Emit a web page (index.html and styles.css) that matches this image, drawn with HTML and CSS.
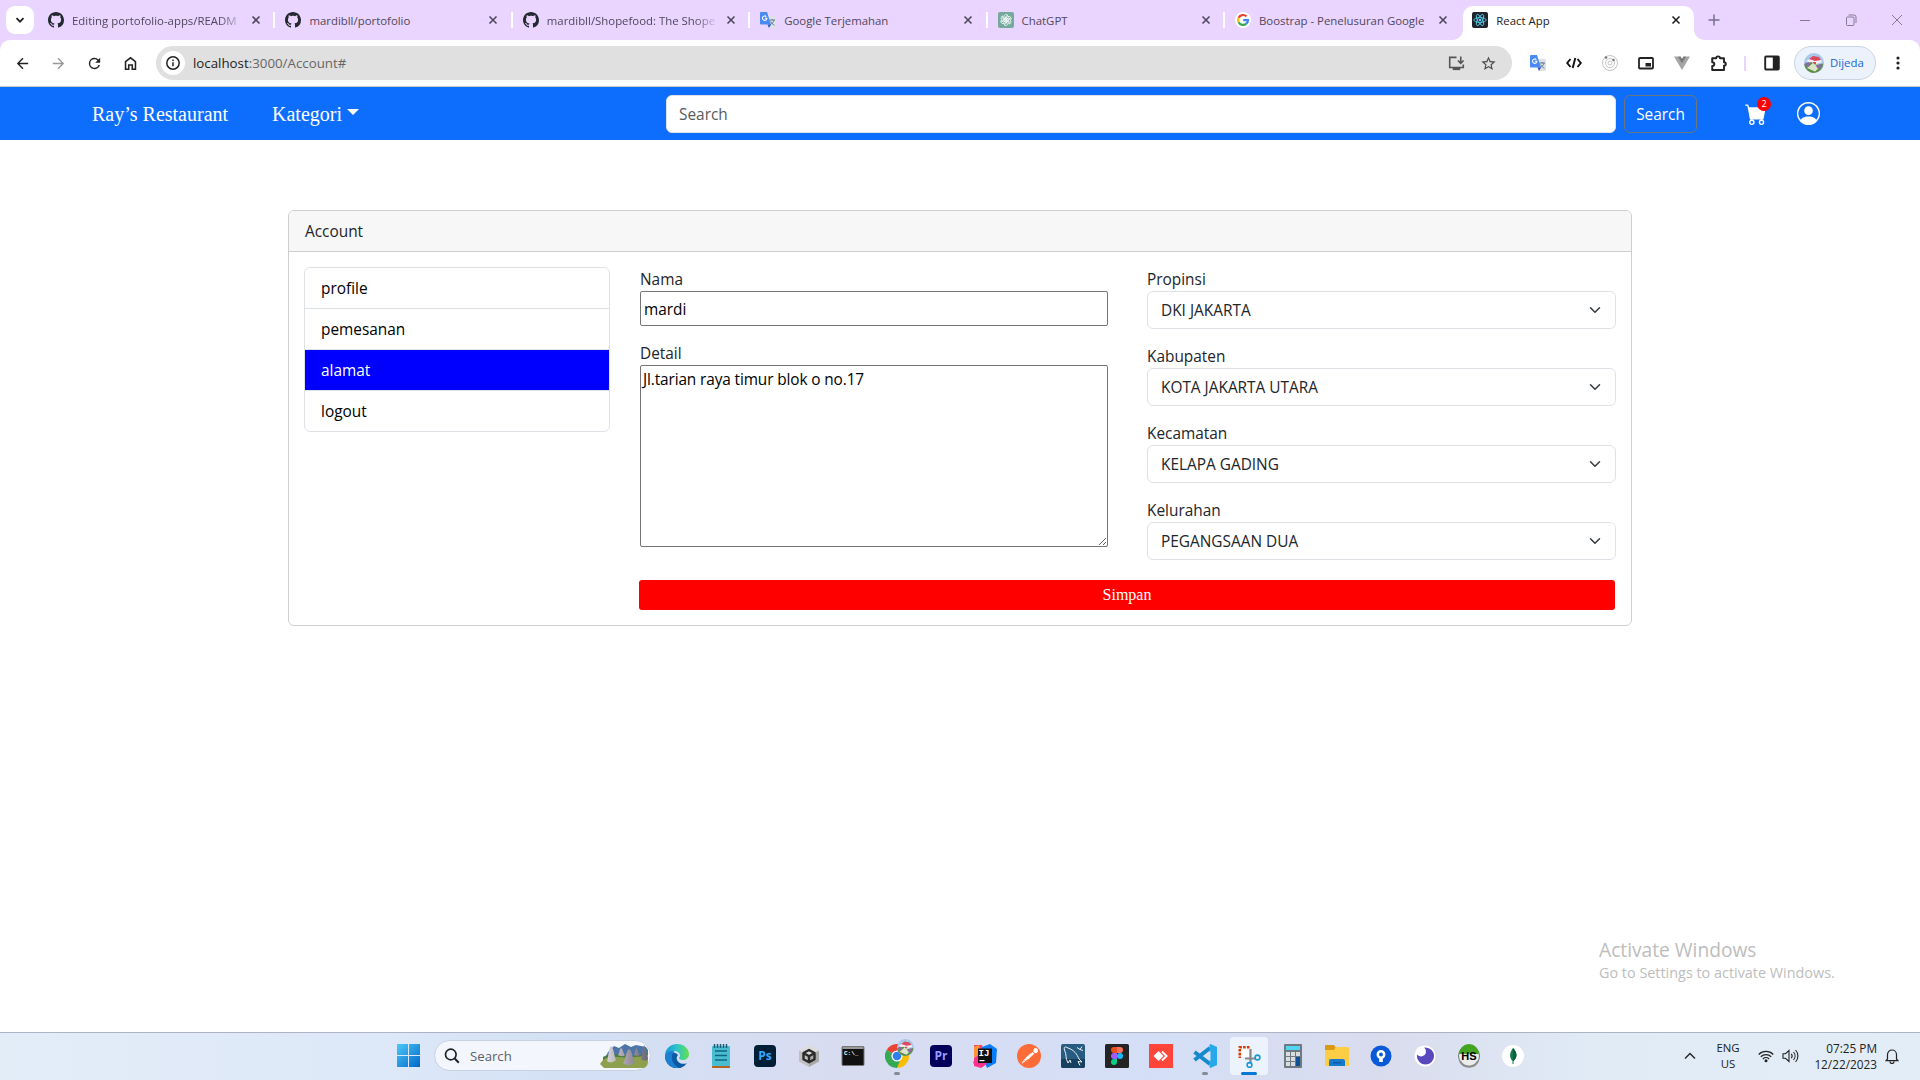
FILE: index.html
```html
<!DOCTYPE html>
<html lang="id">
<head>
<meta charset="utf-8">
<title>React App</title>
<link rel="stylesheet" href="styles.css">
</head>
<body>
<svg class="sprite" aria-hidden="true">
  <symbol id="github" viewBox="0 0 16 16"><path fill="#24292f" d="M8 0C3.58 0 0 3.58 0 8c0 3.54 2.29 6.53 5.47 7.59.4.07.55-.17.55-.38 0-.19-.01-.82-.01-1.49-2.01.37-2.53-.49-2.69-.94-.09-.23-.48-.94-.82-1.13-.28-.15-.68-.52-.01-.53.63-.01 1.08.58 1.23.82.72 1.21 1.87.87 2.33.66.07-.52.28-.87.51-1.07-1.78-.2-3.64-.89-3.64-3.95 0-.87.31-1.59.82-2.15-.08-.2-.36-1.02.08-2.12 0 0 .67-.21 2.2.82.64-.18 1.32-.27 2-.27s1.36.09 2 .27c1.53-1.04 2.2-.82 2.2-.82.44 1.1.16 1.92.08 2.12.51.56.82 1.27.82 2.15 0 3.07-1.87 3.75-3.65 3.95.29.25.54.73.54 1.48 0 1.07-.01 1.93-.01 2.2 0 .21.15.46.55.38A8.01 8.01 0 0 0 16 8c0-4.42-3.58-8-8-8"/></symbol>
  <symbol id="x" viewBox="0 0 16 16"><path d="M4.5 4.5l7 7M11.5 4.5l-7 7" stroke="currentColor" stroke-width="1.6" fill="none"/></symbol>
  <symbol id="translate" viewBox="0 0 16 16"><path fill="#dfe1e5" d="M6 4h9a1 1 0 0 1 1 1v10a1 1 0 0 1-1 1H9z"/><path d="M9.500 8h5.500M12.200 7v1M14 8c-.5 2-2 4-4 5M10.800 9.500c.6 1.500 2 3 3.700 3.700" stroke="#5f7d8c" stroke-width="1" fill="none"/><path fill="#4a8af4" d="M1 0h6l4 12.500H1a1 1 0 0 1-1-1V1a1 1 0 0 1 1-1z"/><path fill="#2a56c6" d="M7.500 12.500H11L9 16z"/><path d="M6.300 4.600A2.200 2.200 0 1 0 6.900 6.300H4.900" stroke="#fff" stroke-width="1.100" fill="none"/></symbol>
  <symbol id="react" viewBox="0 0 16 16"><g fill="none" stroke="#61dafb" stroke-width=".8"><ellipse cx="8" cy="8" rx="6.200" ry="2.400"/><ellipse cx="8" cy="8" rx="6.200" ry="2.400" transform="rotate(60 8 8)"/><ellipse cx="8" cy="8" rx="6.200" ry="2.400" transform="rotate(120 8 8)"/></g><circle cx="8" cy="8" r="1.200" fill="#61dafb"/></symbol>
  <symbol id="knot" viewBox="0 0 16 16"><g fill="none" stroke="#fff" stroke-width=".75" stroke-linecap="round"><path d="M6 9.200V4.800a2.300 2.300 0 0 1 4-1.500L7.500 4.800V8"/><path transform="rotate(60 8 8)" d="M6 9.200V4.800a2.300 2.300 0 0 1 4-1.500L7.500 4.800V8"/><path transform="rotate(120 8 8)" d="M6 9.200V4.800a2.300 2.300 0 0 1 4-1.500L7.500 4.800V8"/><path transform="rotate(180 8 8)" d="M6 9.200V4.800a2.300 2.300 0 0 1 4-1.500L7.500 4.800V8"/><path transform="rotate(240 8 8)" d="M6 9.200V4.800a2.300 2.300 0 0 1 4-1.500L7.500 4.800V8"/><path transform="rotate(300 8 8)" d="M6 9.200V4.800a2.300 2.300 0 0 1 4-1.500L7.500 4.800V8"/></g></symbol>
  <symbol id="google" viewBox="0 0 16 16"><circle cx="8" cy="8" r="8" fill="#fff"/><g fill="none" stroke-width="2.200"><path stroke="#ea4335" d="M11.500 4.400A5 5 0 0 0 3.600 5.700"/><path stroke="#fbbc05" d="M3.600 5.700a5 5 0 0 0 0 4.600"/><path stroke="#34a853" d="M3.600 10.300a5 5 0 0 0 7.700 1.400"/><path stroke="#4285f4" d="M11.300 11.700A5 5 0 0 0 13 8.100H8.200"/></g></symbol>
  <symbol id="landscape" viewBox="0 0 20 20"><circle cx="10" cy="10" r="10" fill="#a9c8ea"/><path fill="#f4eef2" d="M2 8l4-2 11 1 1 2-8 3z"/><path fill="#d84a5c" d="M5 6l4-3 6 1 2 3-6 1zM9 9h3v2H9z"/><path fill="#5d8d4a" d="M.300 11l7-2 5 3 7-1.500A10 10 0 0 1 10 20 10 10 0 0 1 .300 12z"/><path fill="#dbe5c6" d="M3 15l6-5 6 5-4 3.500z"/><path fill="#8d6ba8" d="M1 10l4-1 1 4-3 1zM12 13l5-2 1 3-4 2z"/></symbol>
  <symbol id="chev" viewBox="0 0 16 16"><path fill="none" stroke="#343a40" stroke-linecap="round" stroke-linejoin="round" stroke-width="2" d="m2 5 6 6 6-6"/></symbol>
</svg>

<div class="desktop">
  <header class="tabstrip">
    <div class="tabsearch"><svg width="10" height="10" viewBox="0 0 10 10"><path d="M1.500 3.200L5 6.700l3.500-3.500" fill="none" stroke="#222" stroke-width="1.800"/></svg></div>
    <div class="tabs">
      <div class="tab"><svg class="fav"><use href="#github"/></svg><span class="tab-title faded">Editing portofolio-apps/READM</span><svg class="close"><use href="#x"/></svg></div>
      <div class="tab"><svg class="fav"><use href="#github"/></svg><span class="tab-title">mardibll/portofolio</span><svg class="close"><use href="#x"/></svg></div>
      <div class="tab"><svg class="fav"><use href="#github"/></svg><span class="tab-title faded">mardibll/Shopefood: The Shope</span><svg class="close"><use href="#x"/></svg></div>
      <div class="tab"><svg class="fav"><use href="#translate"/></svg><span class="tab-title">Google Terjemahan</span><svg class="close"><use href="#x"/></svg></div>
      <div class="tab"><svg class="fav fav-gpt"><use href="#knot"/></svg><span class="tab-title">ChatGPT</span><svg class="close"><use href="#x"/></svg></div>
      <div class="tab last"><svg class="fav"><use href="#google"/></svg><span class="tab-title">Boostrap - Penelusuran Google</span><svg class="close"><use href="#x"/></svg></div>
      <div class="tab active"><svg class="fav fav-react"><use href="#react"/></svg><span class="tab-title">React App</span><svg class="close"><use href="#x"/></svg></div>
    </div>
    <svg class="newtab" width="12" height="12" viewBox="0 0 12 12"><path d="M6 .500v11M.500 6h11" stroke="#7a6d8a" stroke-width="1.500"/></svg>
    <div class="wincontrols">
      <svg width="12" height="12" viewBox="0 0 12 12"><path d="M1 6.500h10" stroke="#857a92"/></svg>
      <svg width="12" height="12" viewBox="0 0 12 12"><path d="M1.500 4a1 1 0 0 1 1-1H8a1 1 0 0 1 1 1v6.500a1 1 0 0 1-1 1H2.500a1 1 0 0 1-1-1zM3.500 1H9a2 2 0 0 1 2 2v6" fill="none" stroke="#857a92"/></svg>
      <svg width="12" height="12" viewBox="0 0 12 12"><path d="M1 1l10 10M11 1L1 11" stroke="#857a92"/></svg>
    </div>
  </header>

  <div class="toolbar">
    <div class="navbtns">
      <svg viewBox="0 0 24 24"><path d="M20 11H7.830l5.590-5.590L12 4l-8 8 8 8 1.410-1.410L7.830 13H20z"/></svg>
      <svg viewBox="0 0 24 24" class="dim"><path d="M12 4l-1.410 1.410L16.170 11H4v2h12.170l-5.580 5.590L12 20l8-8z"/></svg>
      <svg viewBox="0 0 24 24"><path d="M17.650 6.350A7.960 7.960 0 0 0 12 4a8 8 0 1 0 7.730 10h-2.080A6 6 0 1 1 12 6c1.660 0 3.140.690 4.220 1.780L13 11h7V4z"/></svg>
      <svg viewBox="0 0 24 24"><path fill="none" stroke="#222" stroke-width="2.200" d="M5 9.500L12 4l7 5.500V20h-4.500v-6h-5v6H5z"/></svg>
    </div>
    <div class="omnibox">
      <span class="info"><svg width="16" height="16" viewBox="0 0 16 16"><circle cx="8" cy="8" r="6.200" fill="none" stroke="#222" stroke-width="1.500"/><path d="M8 7.200v4M8 4.500v1.500" stroke="#222" stroke-width="1.500"/></svg></span>
      <span class="url">localhost<i>:3000/Account#</i></span>
      <svg class="omni-icon" viewBox="0 0 18 18"><path fill="none" stroke="#555" stroke-width="1.700" d="M9 2.500H1.800v10.700h14.400V10M13.500 1.500v7M10.500 5.800l3 3 3-3"/><path fill="#555" d="M5 13h8v3H5z"/></svg>
      <svg class="omni-icon" viewBox="0 0 24 24"><path fill="#4a4a4a" d="M22 9.240l-7.190-.62L12 2 9.190 8.630 2 9.240l5.460 4.730L5.820 21 12 17.270 18.180 21l-1.630-7.030zM12 15.400l-3.760 2.270 1-4.280-3.320-2.880 4.380-.380L12 6.100l1.710 4.040 4.380.380-3.320 2.880 1 4.280z"/></svg>
    </div>
    <div class="extensions">
      <svg viewBox="0 0 16 16"><use href="#translate"/></svg>
      <svg viewBox="0 0 16 16"><path fill="none" stroke="#111" stroke-width="1.900" d="M4.500 4L1.200 8l3.300 4M11.500 4l3.300 4-3.300 4M9.300 3L6.700 13"/></svg>
      <svg viewBox="0 0 16 16"><g fill="none" stroke="#c4c4c4"><circle cx="8" cy="8" r="7.500"/><circle cx="8" cy="8" r="4.500"/><circle cx="8" cy="8" r="2"/></g><circle cx="11.500" cy="5" r="1.300" fill="#777"/><circle cx="4" cy="2.500" r="1.300" fill="#777"/></svg>
      <svg viewBox="0 0 16 16"><rect x="1" y="3" width="14" height="10.500" rx="1" fill="none" stroke="#222" stroke-width="1.800"/><path fill="#222" d="M7.500 8h5.500v3.500H7.500z"/></svg>
      <svg viewBox="0 0 16 16"><path fill="#a5a5a5" d="M0 1.500h4.500L8 8l3.500-6.500H16L8 15z"/><path fill="#777" d="M4 1.500h2.700L8 4l1.300-2.500H12L8 8.500z"/></svg>
      <svg viewBox="0 0 16 16"><path fill="none" stroke="#222" stroke-width="1.900" stroke-linejoin="round" d="M1.200 3.200h4c0-2.400 3.800-2.400 3.800 0h4v4c2.400 0 2.400 3.400 0 3.400v4.400H1.200v-4c2.800 0 2.800-3.800 0-3.800z"/></svg>
    </div>
    <span class="tool-sep"></span>
    <svg class="panel" viewBox="0 0 16 16"><rect x="1.200" y="1.500" width="13.600" height="13" rx="1" fill="none" stroke="#222" stroke-width="1.900"/><path fill="#222" d="M8.800 1.500H15v13H8.800z"/></svg>
    <div class="profile"><svg width="20" height="20"><use href="#landscape"/></svg><span>Dijeda</span></div>
    <svg class="kebab" viewBox="0 0 4 16"><circle cx="2" cy="3" r="1.600"/><circle cx="2" cy="8" r="1.600"/><circle cx="2" cy="13" r="1.600"/></svg>
  </div>

  <nav class="navbar">
    <a class="brand">Ray’s Restaurant</a>
    <a class="category">Kategori<span class="caret"></span></a>
    <input class="search-input" type="text" placeholder="Search">
    <button class="search-btn">Search</button>
    <div class="cart">
      <svg width="22" height="22" viewBox="0 0 16 16"><path fill="#fff" d="M0 1.500A.5.5 0 0 1 .5 1H2a.5.5 0 0 1 .485.379L2.890 3H14.500a.5.5 0 0 1 .491.592l-1.500 8A.5.5 0 0 1 13 12H4a.5.5 0 0 1-.491-.408L2.010 3.607 1.610 2H.5a.5.5 0 0 1-.5-.5M5 12a2 2 0 1 0 0 4 2 2 0 0 0 0-4m7 0a2 2 0 1 0 0 4 2 2 0 0 0 0-4m-7 1a1 1 0 1 1 0 2 1 1 0 0 1 0-2m7 0a1 1 0 1 1 0 2 1 1 0 0 1 0-2"/></svg>
      <span class="badge">2</span>
    </div>
    <svg class="person" viewBox="0 0 16 16"><path fill="#fff" d="M11 6a3 3 0 1 1-6 0 3 3 0 0 1 6 0"/><path fill="#fff" fill-rule="evenodd" d="M0 8a8 8 0 1 1 16 0A8 8 0 0 1 0 8m8-7a7 7 0 0 0-5.468 11.370C3.242 11.226 4.805 10 8 10s4.757 1.225 5.468 2.370A7 7 0 0 0 8 1"/></svg>
  </nav>

  <main class="page">
    <section class="card">
      <div class="card-header">Account</div>
      <div class="card-body">
        <ul class="menu">
          <li>profile</li>
          <li>pemesanan</li>
          <li class="selected">alamat</li>
          <li>logout</li>
        </ul>
        <form class="address">
          <div class="columns">
            <div class="col-left">
              <label>Nama</label>
              <input class="name-input" type="text" value="mardi">
              <label>Detail</label>
              <textarea class="detail-input">Jl.tarian raya timur blok o no.17</textarea>
            </div>
            <div class="col-right">
              <div><label>Propinsi</label><div class="select">DKI JAKARTA<svg><use href="#chev"/></svg></div></div>
              <div><label>Kabupaten</label><div class="select">KOTA JAKARTA UTARA<svg><use href="#chev"/></svg></div></div>
              <div><label>Kecamatan</label><div class="select">KELAPA GADING<svg><use href="#chev"/></svg></div></div>
              <div><label>Kelurahan</label><div class="select">PEGANGSAAN DUA<svg><use href="#chev"/></svg></div></div>
            </div>
          </div>
          <button class="save" type="button">Simpan</button>
        </form>
      </div>
    </section>
  </main>

  <aside class="watermark"><p class="wm-title">Activate Windows</p><p class="wm-sub">Go to Settings to activate Windows.</p></aside>

  <footer class="taskbar">
    <svg class="start" viewBox="0 0 23 23"><defs><linearGradient id="win" x1="0" y1="0" x2="1" y2="1"><stop offset="0" stop-color="#4cc8f8"/><stop offset="1" stop-color="#0067c8"/></linearGradient></defs><path fill="url(#win)" d="M0 0h11v11H0zM12 0h11v11H12zM0 12h11v11H0zM12 12h11v11H12z"/></svg>
    <div class="tasksearch">
      <svg width="16" height="16" viewBox="0 0 16 16"><circle cx="6.800" cy="6.500" r="5.300" fill="none" stroke="#222" stroke-width="1.700"/><path d="M10.500 10.300l4.300 4.500" stroke="#222" stroke-width="2"/></svg>
      <span>Search</span>
      <svg width="48" height="24" viewBox="0 0 48 24"><defs><linearGradient id="stone" x1="0" x2="1"><stop offset="0" stop-color="#d5cfd6"/><stop offset="1" stop-color="#6c6674"/></linearGradient></defs><path fill="#4d74a8" d="M8 8l6-6 5 2 6-4 6 3 5-2 10 2 2 3v10H4z"/><path fill="#4b7b46" d="M3 13c5-3 12-4 22-2s16 0 22-2v10H3z"/><path fill="#8ca04d" d="M0 20c4-7 10-8 18-7s22 0 30-2v6c0 4-2 7-5 7H4z"/><g fill="url(#stone)"><path d="M11 2c3 2 3 10 5 14-3 3-7 3-9 1 2-5 1-11 4-15zM29 5c4 2 3 10 6 13-3 4-9 4-12 1 3-4 2-10 6-14zM44 1c2 3 2 9 4 14-2 2-5 2-7 0 2-5 1-9 3-14zM21 4c2 1 2 5 4 7-2 2-5 1-7 0 2-2 1-6 3-7zM36 4c2 1 2 5 4 7-2 1-4 1-6 0 1-2 1-5 2-7z"/></g></svg>
    </div>
    <div class="apps">
      <div class="app"><svg viewBox="0 0 24 24"><defs><linearGradient id="edgeTop" x1="0" x2="1"><stop offset="0" stop-color="#1894d8"/><stop offset=".5" stop-color="#2bc5c9"/><stop offset="1" stop-color="#65e04a"/></linearGradient></defs><path fill="#0c59a4" d="M0 12a12 12 0 0 0 22 7c-3 1.500-7 1-9-1.500s-1.500-4.500 0-6.500c-5-5-12-3-13 1z"/><path fill="url(#edgeTop)" d="M0 12C0 5 5 0 12 0s12 5 12 10c0 4-3 6-6 6-2.500 0-4-1-4-2 0-.8 1-1 1-2.500C15 8 11 6.500 8 7S1 8.500 0 12z"/><path fill="#1b7fd2" d="M0 12C1 8 6 6 9.500 7.500 6 10 6 17 10 21c1.500 1.500 3 2.500 4.500 2.700A12 12 0 0 1 0 12z"/></svg></div>
      <div class="app"><svg viewBox="0 0 24 24"><rect x="3" y="2" width="18" height="20" rx="1" fill="#48bdd2"/><path fill="#b5651d" d="M3 22h18v2H3z"/><path d="M5.500 0v4M8.500 0v4M11.500 0v4M14.500 0v4M17.500 0v4" stroke="#1b5d74" stroke-width="1.500"/><path d="M6 7h12M6 11.500h12M6 16h12" stroke="#0f6680" stroke-width="1.500"/></svg></div>
      <div class="app"><span class="tile ps">Ps</span></div>
      <div class="app"><svg viewBox="0 0 24 24"><path fill="#dcdcdc" d="M12 1l10 5.500v11L12 23 2 17.500v-11z"/><path fill="#a9a9a9" d="M12 12l10-5.500v11L12 23z"/><path fill="#bfbfbf" d="M2 6.500L12 12v11L2 17.500z"/><path fill="none" stroke="#2b2b2b" stroke-width="2.400" stroke-linejoin="round" d="M12 6l5.500 3v6.200L12 18.300l-5.500-3.100V9zM6.500 9l5.500 3.200L17.500 9M12 12.200v6"/></svg></div>
      <div class="app"><svg viewBox="0 0 24 24"><rect x="1" y="2.500" width="22" height="19" rx="1" fill="#111" stroke="#777"/><path fill="#999" d="M1.500 3h21v2h-21z"/><text x="3" y="11" class="cmd-text">C:\_</text></svg></div>
      <div class="app running"><svg viewBox="0 0 24 24"><path fill="#ea4335" d="M12 12L1.600 6A12 12 0 0 1 22.400 6z"/><path fill="#34a853" d="M12 12L1.600 6A12 12 0 0 0 12 24l5.200-9z"/><path fill="#fbbc05" d="M12 12h5l-5 12A12 12 0 0 0 22.400 6H12z"/><circle cx="12" cy="12" r="5.600" fill="#fff"/><circle cx="12" cy="12" r="4.300" fill="#2d7ff0"/></svg><svg class="avatar-badge"><use href="#landscape"/></svg></div>
      <div class="app"><span class="tile pr">Pr</span></div>
      <div class="app"><svg viewBox="0 0 24 24"><path fill="#ff3b68" d="M1 1h8l2 9-5 13-6-4 3-8z"/><path fill="#087cfa" d="M9 3l8-3 7 5-1 14-9 5-4-10z"/><path fill="#fe9235" d="M1 3l5-2 2 9-7 4z"/><path fill="#ff318c" d="M1 14l5-3 8 9-6 4-7-2z"/><path fill="#111" d="M5 4.500h14v14.500H5z"/><text x="5.500" y="12" class="ij-text">IJ</text><path fill="#fff" d="M6.500 16h5v1.200h-5z"/></svg></div>
      <div class="app"><svg viewBox="0 0 24 24"><circle cx="12" cy="12" r="12" fill="#ff6c37"/><path fill="#fff" d="M17 4.500a2.600 2.600 0 1 1 .8 4.600l-1.600-1.500zM15.500 8l1.800 1.800-6.300 5.700-3 .8.800-2.800z"/><path d="M8.500 14.500L5 19l4.500-3" stroke="#fff" stroke-width="1" fill="none"/></svg></div>
      <div class="app"><svg viewBox="0 0 24 24"><rect width="24" height="24" rx="2" fill="#275b80"/><path fill="#17405e" d="M0 15h24v7a2 2 0 0 1-2 2H2a2 2 0 0 1-2-2z"/><path fill="none" stroke="#e9f1f5" stroke-width="1" d="M7 19C4 14 6 11 3.500 6 2.500 3 4 2 7 4c6 2 9 6 11 11l3 3-4-.500 2 4M16 3.500l3 2 2-3M19 5.500l3 1M7 19l2-3 1 3"/></svg></div>
      <div class="app"><svg viewBox="0 0 24 24"><rect width="24" height="24" rx="1.500" fill="#242424"/><path fill="#f24e1e" d="M12 3H9a3 3 0 0 0 0 6h3z"/><path fill="#ff7262" d="M12 3h3a3 3 0 0 1 0 6h-3z"/><path fill="#a259ff" d="M12 9H9a3 3 0 0 0 0 6h3z"/><circle cx="15" cy="12" r="3" fill="#1abcfe"/><path fill="#0acf83" d="M9 15h3v3a3 3 0 1 1-3-3z"/></svg></div>
      <div class="app"><svg viewBox="0 0 24 24"><path fill="#ff443a" d="M0 0h24v24H0z"/><path fill="#fff" d="M9.500 7l5 5-5 5-5-5z"/><path fill="none" stroke="#fff" stroke-width="2" d="M13 7.500l4.500 4.500-4.500 4.500"/></svg></div>
      <div class="app running"><svg viewBox="0 0 24 24"><path fill="none" stroke="#1688cc" stroke-width="4" stroke-linejoin="round" d="M1.500 8L17 20M1.500 16L17 4"/><path fill="#28a8ea" d="M17.500 0L24 3v18l-6.500 3-1-1V1z"/><path fill="#d7e0f5" d="M17.500 7v10L11 12z"/></svg></div>
      <div class="app current"><svg viewBox="0 0 24 24"><path fill="#fff" d="M3 3h9v10H3z"/><path fill="none" stroke="#d83b01" stroke-width="2.600" stroke-dasharray="2.600 1.200" d="M12.500 3.300H2.800V14"/><path d="M13.500 5v9.500H19M8 14.500h5.500V19" fill="none" stroke="#888" stroke-width="2.200"/><circle cx="20.500" cy="13.500" r="2.400" fill="none" stroke="#1599d8" stroke-width="1.600"/><circle cx="12.500" cy="21" r="2.400" fill="none" stroke="#1599d8" stroke-width="1.600"/></svg></div>
      <div class="app"><svg viewBox="0 0 24 24"><rect x="3" width="18" height="24" rx="1" fill="#707880"/><path fill="#50d5f3" d="M5 2h14v4H5z"/><path fill="#d8dde0" d="M5 8h4v4H5zM10 8h4v4h-4zM15 8h4v4h-4zM5 13h4v4H5zM10 13h4v4h-4zM5 18h4v4H5zM10 18h4v4h-4z"/><path fill="#105094" d="M15 13h4v9h-4z"/></svg></div>
      <div class="app"><svg viewBox="0 0 24 24"><path fill="#d99a11" d="M0 2a1 1 0 0 1 1-1h8l2 3v5H0z"/><path fill="#fdce45" d="M0 6h9l2-3h12a1 1 0 0 1 1 1v18H0z"/><path fill="#1679cb" d="M4 22v-5a2 2 0 0 1 2-2h12a2 2 0 0 1 2 2v5z"/><path fill="#0d5baa" d="M8 18h8v1.500H8z"/></svg></div>
      <div class="app"><svg viewBox="0 0 24 24"><circle cx="12" cy="12" r="10.500" fill="#0959d9"/><circle cx="12" cy="10.500" r="3.200" fill="none" stroke="#fff" stroke-width="2.500"/><path fill="#fff" d="M10.200 13h3.600v5h-3.600z"/></svg></div>
      <div class="app"><svg viewBox="0 0 24 24"><circle cx="12" cy="12" r="10.500" fill="#fff"/><circle cx="12.500" cy="12" r="8.600" fill="#5a49be"/><circle cx="8" cy="7.500" r="5" fill="#fff"/></svg></div>
      <div class="app"><svg viewBox="0 0 24 24"><circle cx="12" cy="12" r="10.500" fill="#ececec" stroke="#777" stroke-width="1"/><path fill="#43a51f" d="M2 10a10 10 0 0 1 20 0z"/><path fill="none" stroke="#8b8b8b" stroke-width="2" d="M3 17a10 10 0 0 0 18 0"/><text x="4.300" y="16.300" class="hs-text">HS</text></svg></div>
      <div class="app"><svg viewBox="0 0 24 24"><circle cx="12" cy="12" r="11" fill="#fff"/><path fill="#13794b" d="M12 4c4 4 5 9 .500 13v3h-1v-3C7.500 13 9 8 12 4z"/><path fill="#06623b" d="M12 4c4 4 5 9 .500 13H12z"/></svg></div>
    </div>
    <div class="tray">
      <svg width="12" height="8" viewBox="0 0 12 8"><path d="M1 6.500l5-5 5 5" fill="none" stroke="#222" stroke-width="1.400"/></svg>
      <div class="lang">ENG<br>US</div>
      <svg class="wifi" width="16" height="14" viewBox="0 0 16 14"><g fill="none" stroke="#222" stroke-width="1.200"><path d="M.700 5.500a10.300 10.300 0 0 1 14.600 0M2.800 7.800a7.400 7.400 0 0 1 10.400 0M4.900 10a4.400 4.400 0 0 1 6.200 0"/></g><circle cx="8" cy="11.700" r="1.500" fill="#222"/></svg>
      <svg class="volume" width="17" height="14" viewBox="0 0 17 14"><g fill="none" stroke="#222" stroke-width="1.100"><path d="M1 4.700h2.500L7 1.500v11L3.500 9.300H1zM9.300 4.800a3.500 3.500 0 0 1 0 4.400M11.500 3a6 6 0 0 1 0 8M13.600 1a9 9 0 0 1 0 12"/></g></svg>
      <div class="clock">07:25 PM<br>12/22/2023</div>
      <svg width="14" height="16" viewBox="0 0 14 16"><path d="M2.500 11V6.500a4.500 4.500 0 0 1 9 0V11l1.500 1.700H1zM5 13.500a2 2 0 0 0 4 0" fill="none" stroke="#222" stroke-width="1.200"/></svg>
    </div>
  </footer>
</div>
</body>
</html>
```
FILE: styles.css
```css
* { box-sizing: border-box; }
body { margin: 0; font: 15.4px/24px "Open Sans", sans-serif; color: #212529; background: #fff; }
svg { display: block; flex: none; }
i { font-style: normal; }
.sprite { width: 0; height: 0; position: absolute; }
.desktop { width: 1920px; height: 1080px; display: flex; flex-direction: column; overflow: hidden; position: relative; background: linear-gradient(#e9d5ff 60px, #fff 60px); }

/* browser tabs */
.tabstrip { height: 40px; display: flex; align-items: center; }
.tabsearch { width: 28px; height: 28px; margin-left: 6px; border-radius: 9px; background: #fff; display: flex; align-items: center; justify-content: center; }
.tabs { display: flex; margin-left: 4px; height: 40px; align-items: flex-end; }
.tab { width: 237.4px; height: 34px; padding: 0 10px 6px; display: flex; align-items: center; color: #51475c; background: linear-gradient(#fff, #fff) right 6px / 2px 16px no-repeat; }
.tab.last { background: none; }
.tab.active { position: relative; width: 231px; margin-left: 1px; padding-left: 9px; background: #fff; border-radius: 10px 10px 0 0; color: #222; }
.tab.active .close { color: #222; }
.tab.active::before, .tab.active::after { content: ""; position: absolute; bottom: 0; width: 10px; height: 10px; }
.tab.active::before { left: -10px; background: radial-gradient(circle at 0 0, transparent 9.5px, #fff 10px); }
.tab.active::after { right: -10px; background: radial-gradient(circle at 100% 0, transparent 9.5px, #fff 10px); }
.fav { width: 16px; height: 16px; margin-right: 8px; }
.fav-gpt { background: #74aa9c; border-radius: 2px; }
.fav-react { background: #20232a; border-radius: 2px; }
.tab-title { width: 168px; margin-right: 8px; padding-top: 1px; white-space: nowrap; font-size: 11.4px; line-height: 18px; }
.faded { -webkit-mask-image: linear-gradient(90deg, #000 148px, transparent 172px); mask-image: linear-gradient(90deg, #000 148px, transparent 172px); }
.close { width: 16px; height: 16px; color: #51475c; }
.newtab { margin-left: 14px; }
.wincontrols { display: flex; gap: 34px; margin-left: auto; margin-right: 17px; }

/* browser toolbar */
.toolbar { height: 47px; border-bottom: 1px solid #cbc8c8; border-radius: 10px 10px 0 0; background: #fff; display: flex; align-items: center; }
.navbtns { display: flex; gap: 19px; margin-left: 14px; fill: #222; }
.navbtns svg { width: 17px; height: 17px; }
.navbtns .dim { fill: #999; }
.omnibox { width: 1356px; height: 34px; margin-left: 17px; padding: 0 15px 0 5px; border-radius: 17px; background: #e0e0e0; display: flex; align-items: center; }
.info { width: 24px; height: 24px; border-radius: 50%; background: #fff; display: flex; align-items: center; justify-content: center; }
.url { flex: 1; margin-left: 8px; font-size: 13.3px; color: #222; }
.url i { color: #666; }
.omni-icon { width: 17px; height: 17px; margin-left: 15px; }
.extensions { display: flex; gap: 20px; margin-left: 18px; }
.extensions svg { width: 16px; height: 16px; }
.extensions svg:last-child { margin-left: 1px; }
.tool-sep { width: 2px; height: 15px; margin-left: 17px; background: #e9d5ff; }
.panel { width: 16px; height: 16px; margin-left: 18px; }
.profile { width: 82px; height: 34px; margin-left: 14px; padding-left: 9px; border: 1px solid #ccd4e4; border-radius: 17px; background: #ebf2fc; display: flex; align-items: center; gap: 6px; font-size: 11.4px; color: #1967d2; }
.kebab { width: 4px; height: 16px; margin-left: 20px; fill: #222; }

/* site navigation */
.navbar { height: 53px; background: #0d6efd; display: flex; align-items: center; color: #fff; }
.brand { width: 180px; margin-left: 92px; font: 20px/24px "Liberation Serif", serif; white-space: nowrap; }
.category { width: 394px; display: flex; font: 20px/24px "Liberation Serif", serif; }
.caret { margin: 7px 0 0 5px; width: 12px; height: 6px; border: 6px solid transparent; border-top-color: #fff; border-bottom: 0; }
.search-input { width: 950px; height: 38px; border: 1px solid #dee2e6; border-radius: 6px; padding: 2px 12px 0; font: inherit; }
.search-input::placeholder { color: #555b61; opacity: 1; }
.search-btn { width: 73px; height: 38px; margin-left: 8px; padding: 2px 0 0; border: 1px solid #6c757d; border-radius: 6px; background: none; color: #fff; font: inherit; }
.cart { position: relative; margin-left: 48px; }
.badge { position: absolute; left: 12px; top: -6px; width: 14px; height: 14px; border-radius: 50%; background: #f00; font-size: 9px; line-height: 14px; text-align: center; }
.person { width: 23px; height: 23px; margin-left: 30px; }

/* account card */
.page { flex: 1; padding-top: 70px; background: #fff; }
.card { width: 1344px; height: 416px; margin: 0 auto; border: 1px solid #cfcfcf; border-radius: 6px; overflow: hidden; }
.card-header { height: 41px; padding: 9px 16px 7px; border-bottom: 1px solid #cfcfcf; background: #f7f7f7; }
.card-body { display: flex; padding: 15px; }
.menu { width: 306px; height: 165px; margin: 0; padding: 0; list-style: none; border: 1px solid #dee2e6; border-radius: 6px; color: #000; }
.menu li { height: 41px; padding: 9px 16px 7px; border-bottom: 1px solid #dee2e6; }
.menu li:last-child { border-bottom: 0; }
.menu .selected { background: #00f; background-clip: padding-box; color: #fff; }
.address { width: 977px; margin-left: 29px; }
.columns { display: flex; gap: 39px; height: 313px; margin-left: 1px; }
.col-left { width: 468px; display: flex; flex-direction: column; }
.col-right { width: 469px; display: flex; flex-direction: column; gap: 15px; }
label { display: block; height: 24px; padding-top: 1px; flex: none; }
.name-input { height: 35px; margin-bottom: 15px; border: 1px solid #767676; border-radius: 2px; padding: 2px 3px 0; font: inherit; color: #000; }
.detail-input { height: 182px; border: 1px solid #767676; border-radius: 2px; padding: 2px; font: inherit; letter-spacing: -.12px; color: #000; }
.select { height: 38px; padding: 2px 12px 0 13px; border: 1px solid #dee2e6; border-radius: 6px; display: flex; align-items: center; justify-content: space-between; }
.select svg { width: 16px; height: 12px; margin-top: -2px; }
.save { display: block; width: 976px; height: 30px; padding: 0; border: 0; border-radius: 3px; background: #f00; color: #fff; font: 16px/24px "Liberation Serif", serif; }

.watermark { position: absolute; left: 1599px; top: 936px; color: #bdbdbd; }
.watermark p { margin: 0; white-space: nowrap; }
.wm-title { font-size: 19.2px; line-height: 27px; }
.wm-sub { font-size: 14.4px; line-height: 20px; }

/* taskbar */
.taskbar { height: 48px; padding-bottom: 2px; border-top: 1px solid #adb3c4; background: linear-gradient(90deg, #e3edf8 0, #dde8f8 20%, #d3e0f5 30%, #d8dcf1 44%, #d4dff7 60%, #d9dced 72%, #e0ebf6 83%, #e3edf8 100%); display: flex; align-items: center; }
.start { width: 23px; height: 23px; margin-left: 397px; }
.tasksearch { width: 217px; height: 31px; margin-left: 14px; padding: 0 2px 0 9px; border: 1px solid #c7d1e2; border-radius: 16px; background: #f3f7fd; display: flex; align-items: center; color: #5c6066; font-size: 13.2px; }
.tasksearch span { flex: 1; margin-left: 10px; }
.apps { display: flex; gap: 6px; margin-left: 7px; }
.app { position: relative; width: 38px; height: 38px; display: flex; align-items: center; justify-content: center; border-radius: 4px; }
.app > svg { width: 24px; height: 24px; }
.current { background: #edf3fc; }
.running::after, .current::after { content: ""; position: absolute; bottom: 0; left: 16px; width: 6px; height: 3px; border-radius: 2px; background: #858b96; }
.current::after { left: 11px; width: 16px; background: #0078d4; }
.tile { width: 22px; height: 22px; border-radius: 4px; text-align: center; font-size: 12px; line-height: 21px; font-weight: 700; }
.ps { background: #001e36; color: #31a8ff; }
.pr { background: #00005b; color: #9999ff; }
.app > .avatar-badge { position: absolute; left: 19px; top: 2px; width: 17px; height: 17px; }
.cmd-text { font: 700 6px "Liberation Mono", monospace; fill: #fff; }
.ij-text { font: 700 9px "Liberation Mono", monospace; fill: #fff; }
.hs-text { font: 700 11px "Liberation Sans", sans-serif; fill: #000; }
.tray { flex: 1; display: flex; align-items: center; padding-left: 152px; font-size: 11.8px; line-height: 16px; color: #222; }
.lang { width: 30px; margin-left: 17px; text-align: center; font-size: 11.4px; }
.wifi { margin-left: 15px; }
.volume { margin-left: 8px; }
.clock { width: 78px; text-align: right; white-space: nowrap; }
.clock + svg { margin-left: 8px; }
```
